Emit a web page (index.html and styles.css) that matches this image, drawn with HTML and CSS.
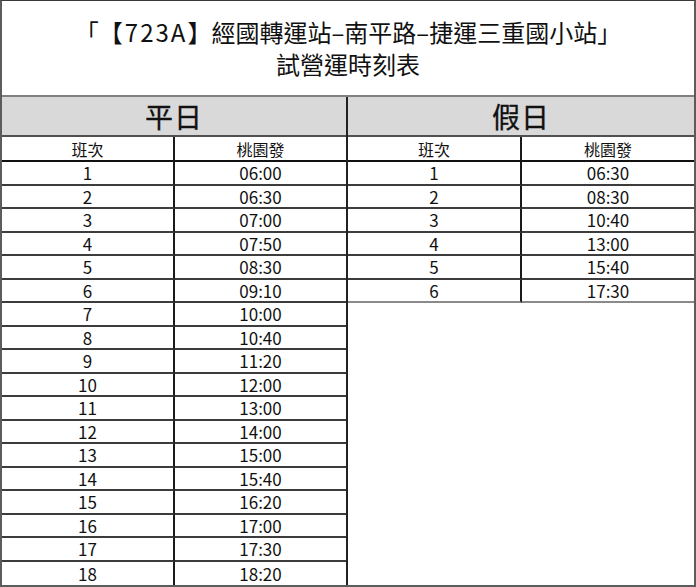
FILE: index.html
```html
<!DOCTYPE html>
<html lang="zh-Hant">
<head>
<meta charset="utf-8">
<title>723A 試營運時刻表</title>
<link rel="stylesheet" href="styles.css">
</head>
<body>
<div class="sheet">
  <div class="title">
    <div class="title-line">「【<span class="code">723A</span>】經國轉運站–南平路–捷運三重國小站」</div>
    <div class="title-line">試營運時刻表</div>
  </div>
  <div class="halves">
    <section class="half half-left">
      <div class="day">平日</div>
      <div class="grid grid-left">
        <div class="cell head c1">班次</div><div class="cell head">桃園發</div>
        <div class="cell c1">1</div><div class="cell">06:00</div>
        <div class="cell c1">2</div><div class="cell">06:30</div>
        <div class="cell c1">3</div><div class="cell">07:00</div>
        <div class="cell c1">4</div><div class="cell">07:50</div>
        <div class="cell c1">5</div><div class="cell">08:30</div>
        <div class="cell c1">6</div><div class="cell">09:10</div>
        <div class="cell c1">7</div><div class="cell">10:00</div>
        <div class="cell c1">8</div><div class="cell">10:40</div>
        <div class="cell c1">9</div><div class="cell">11:20</div>
        <div class="cell c1">10</div><div class="cell">12:00</div>
        <div class="cell c1">11</div><div class="cell">13:00</div>
        <div class="cell c1">12</div><div class="cell">14:00</div>
        <div class="cell c1">13</div><div class="cell">15:00</div>
        <div class="cell c1">14</div><div class="cell">15:40</div>
        <div class="cell c1">15</div><div class="cell">16:20</div>
        <div class="cell c1">16</div><div class="cell">17:00</div>
        <div class="cell c1">17</div><div class="cell">17:30</div>
        <div class="cell c1 last">18</div><div class="cell last">18:20</div>
      </div>
    </section>
    <section class="half half-right">
      <div class="day">假日</div>
      <div class="grid grid-right">
        <div class="cell head c1">班次</div><div class="cell head">桃園發</div>
        <div class="cell c1">1</div><div class="cell">06:30</div>
        <div class="cell c1">2</div><div class="cell">08:30</div>
        <div class="cell c1">3</div><div class="cell">10:40</div>
        <div class="cell c1">4</div><div class="cell">13:00</div>
        <div class="cell c1">5</div><div class="cell">15:40</div>
        <div class="cell c1 soft">6</div><div class="cell soft">17:30</div>
      </div>
    </section>
  </div>
</div>
</body>
</html>
```
FILE: styles.css
```css
html, body {
  margin: 0;
  padding: 0;
  background: #ffffff;
}

.sheet {
  width: 696px;
  height: 587px;
  box-sizing: border-box;
  border: 2px solid #5c5c5c;
  border-top: 1px solid #3a3a3a;
  display: flex;
  flex-direction: column;
  font-family: "Noto Sans CJK TC", "Noto Sans", sans-serif;
  color: #111;
  overflow: hidden;
}

.title {
  height: 94px;
  box-sizing: border-box;
  padding-top: 15px;
  text-align: center;
  font-size: 24px;
  line-height: 32px;
  flex: none;
  text-spacing-trim: space-all;
}

.title-line {
  white-space: nowrap;
}

.code {
  letter-spacing: 2px;
  margin-left: 2px;
}

.halves {
  display: grid;
  grid-template-columns: 346px 346px;
  border-top: 2px solid #808080;
  flex: 1;
}

.half-left {
  border-right: 2px solid #222;
}

.day {
  height: 40px;
  box-sizing: border-box;
  background: #d9d9d9;
  border-bottom: 2px solid #505050;
  display: flex;
  align-items: center;
  justify-content: center;
  font-size: 28px;
  font-weight: 400;
  letter-spacing: 1px;
  line-height: 1;
  -webkit-text-stroke: 0.3px #111;
}

.grid {
  display: grid;
}

.grid-left {
  grid-template-columns: 173px 171px;
  grid-auto-rows: 23.5px;
  grid-template-rows: 25px;
}

.grid-right {
  grid-template-columns: 174px 172px;
  grid-auto-rows: 23.5px;
  grid-template-rows: 25px;
}

.cell {
  box-sizing: border-box;
  border-bottom: 2px solid #3c3c3c;
  display: flex;
  align-items: center;
  justify-content: center;
  font-size: 17px;
  line-height: 1;
}

.cell.head {
  font-size: 16px;
  border-bottom-color: #111;
}

.cell.c1 {
  border-right: 2px solid #1a1a1a;
}

.cell.soft {
  border-bottom-color: #8a8a8a;
}

.cell.last {
  border-bottom: none;
}
```
